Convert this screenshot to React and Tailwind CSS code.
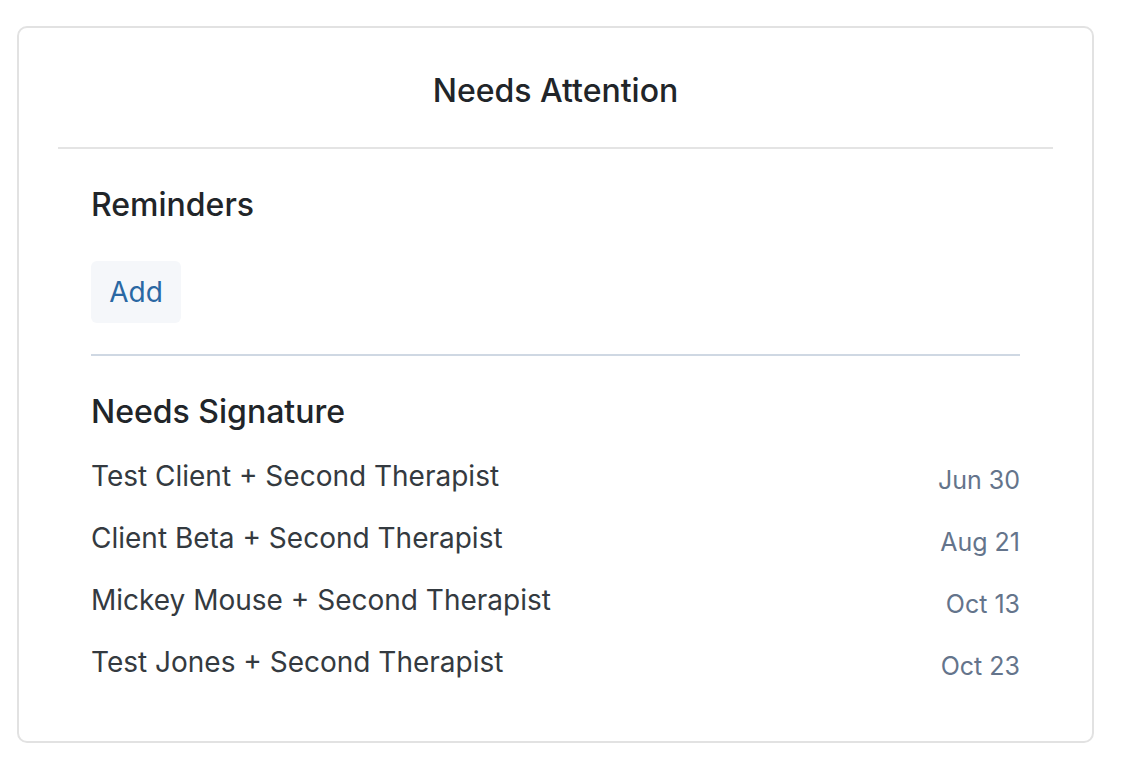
import React from "react";

const rows = [
  ["Test Client + Second Therapist", "Jun 30"],
  ["Client Beta + Second Therapist", "Aug 21"],
  ["Mickey Mouse + Second Therapist", "Oct 13"],
  ["Test Jones + Second Therapist", "Oct 23"],
];

export default function App() {
  return (
    <div className="w-[1122px] h-[760px] bg-white pt-[26px] pl-[17px]" style={{ fontFamily: "Inter, 'Noto Sans', sans-serif" }}>
      <div className="w-[1077px] h-[717px] rounded-[10px] border-2 border-[#e2e2e2] bg-white flex flex-col">
        <div className="mx-[39px] h-[121px] border-b-2 border-[#e4e4e4] flex items-center justify-center">
          <h2 className="text-[32px] font-medium text-[#212529] leading-[40px] mt-[6px]">Needs Attention</h2>
        </div>
        <div className="px-[72px] flex flex-col">
          <h3 className="mt-[38px] text-[32px] font-medium text-[#212529] leading-[36px]">Reminders</h3>
          <div className="mt-[38px]">
            <button className="h-[62px] w-[90px] rounded-[6px] bg-[#f5f7fa] text-[#2a68a3] text-[28px] flex items-center justify-center">Add</button>
          </div>
          <div className="mt-[31px] border-t-2 border-[#cfd8e3]" />
          <h3 className="mt-[38px] text-[32px] font-medium text-[#212529] leading-[36px]">Needs Signature</h3>
          <div className="mt-[28px] flex flex-col gap-[26px]">
            {rows.map(([name, date]) => (
              <div key={name} className="flex items-center justify-between h-[36px]">
                <span className="text-[28px] text-[#343a40] leading-[36px]">{name}</span>
                <span className="text-[25px] text-[#64748b] leading-[36px] mt-[8px]">{date}</span>
              </div>
            ))}
          </div>
        </div>
      </div>
    </div>
  );
}
